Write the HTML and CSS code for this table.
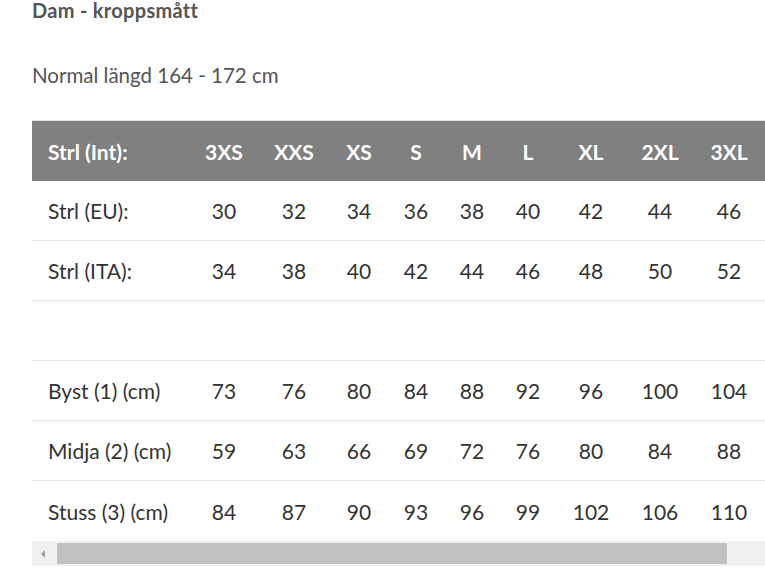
FILE: index.html
```html
<!DOCTYPE html>
<html lang="sv">
<head>
<meta charset="utf-8">
<title>Dam - kroppsmått</title>
<link rel="stylesheet" href="styles.css">
</head>
<body>
<div class="page">
  <h3 class="title">Dam - kroppsmått</h3>
  <p class="subtitle">Normal längd 164 - 172 cm</p>
  <div class="scroller">
    <div class="table-wrap">
      <table class="sizes">
        <colgroup>
          <col class="c-label"><col class="c-3xs"><col class="c-xxs"><col class="c-xs"><col class="c-s"><col class="c-m"><col class="c-l"><col class="c-xl"><col class="c-2xl"><col class="c-3xl"><col class="c-4xl">
        </colgroup>
        <thead>
          <tr><th>Strl (Int):</th><th>3XS</th><th>XXS</th><th>XS</th><th>S</th><th>M</th><th>L</th><th>XL</th><th>2XL</th><th>3XL</th><th>4XL</th></tr>
        </thead>
        <tbody>
          <tr><td>Strl (EU):</td><td>30</td><td>32</td><td>34</td><td>36</td><td>38</td><td>40</td><td>42</td><td>44</td><td>46</td><td>48</td></tr>
          <tr><td>Strl (ITA):</td><td>34</td><td>38</td><td>40</td><td>42</td><td>44</td><td>46</td><td>48</td><td>50</td><td>52</td><td>54</td></tr>
          <tr class="empty"><td colspan="11"></td></tr>
          <tr><td>Byst (1) (cm)</td><td>73</td><td>76</td><td>80</td><td>84</td><td>88</td><td>92</td><td>96</td><td>100</td><td>104</td><td>108</td></tr>
          <tr><td>Midja (2) (cm)</td><td>59</td><td>63</td><td>66</td><td>69</td><td>72</td><td>76</td><td>80</td><td>84</td><td>88</td><td>92</td></tr>
          <tr><td>Stuss (3) (cm)</td><td>84</td><td>87</td><td>90</td><td>93</td><td>96</td><td>99</td><td>102</td><td>106</td><td>110</td><td>114</td></tr>
        </tbody>
      </table>
    </div>
    <div class="hscroll">
      <span class="arrow-left"></span>
      <span class="thumb"></span>
    </div>
  </div>
</div>
</body>
</html>
```
FILE: styles.css
```css
html, body {
  margin: 0;
  padding: 0;
  background: #fff;
  overflow: hidden;
}
body {
  font-family: Lato, "Open Sans", sans-serif;
  color: #333;
}
.page {
  padding-left: 32px;
  width: 800px;
}
.title {
  margin: -2px 0 0 0;
  font-size: 20px;
  font-weight: 700;
  line-height: 24px;
  letter-spacing: 0.3px;
  color: #555;
}
.subtitle {
  margin: 41px 0 0 0;
  font-size: 20.5px;
  line-height: 24px;
  color: #555;
}
.scroller {
  margin-top: 33px;
  width: 820px;
}
.table-wrap {
  overflow: hidden;
}
.sizes {
  border-collapse: collapse;
  table-layout: fixed;
  width: 820px;
  font-size: 21px;
}
.c-label { width: 158px; }
.c-3xs { width: 68px; }
.c-xxs { width: 72px; }
.c-xs { width: 58px; }
.c-s { width: 56px; }
.c-m { width: 56px; }
.c-l { width: 56px; }
.c-xl { width: 70px; }
.c-2xl { width: 68px; }
.c-3xl { width: 70px; }
.c-4xl { width: 88px; }
.sizes th,
.sizes td {
  height: 59px;
  padding: 0;
  text-align: center;
  white-space: nowrap;
  vertical-align: middle;
}
.sizes th {
  background: #808080;
  color: #fff;
  font-weight: 700;
  height: 60px;
  border-top: 1px solid #e2e2e2;
}
.sizes td {
  border-bottom: 1px solid #e4e4e4;
  color: #333;
}
.sizes tbody tr:last-child td {
  border-bottom: 0;
  height: 60px;
}
.sizes th:first-child,
.sizes td:first-child {
  text-align: left;
  padding-left: 16px;
}
.hscroll {
  position: relative;
  height: 25px;
  background: #f1f1f1;
  display: flex;
  align-items: center;
}
.arrow-left {
  width: 0;
  height: 0;
  margin-left: 9px;
  border-top: 4px solid transparent;
  border-bottom: 4px solid transparent;
  border-right: 4px solid #a3a3a3;
}
.thumb {
  margin-left: 12px;
  width: 670px;
  height: 21px;
  background: #c1c1c1;
}
```
